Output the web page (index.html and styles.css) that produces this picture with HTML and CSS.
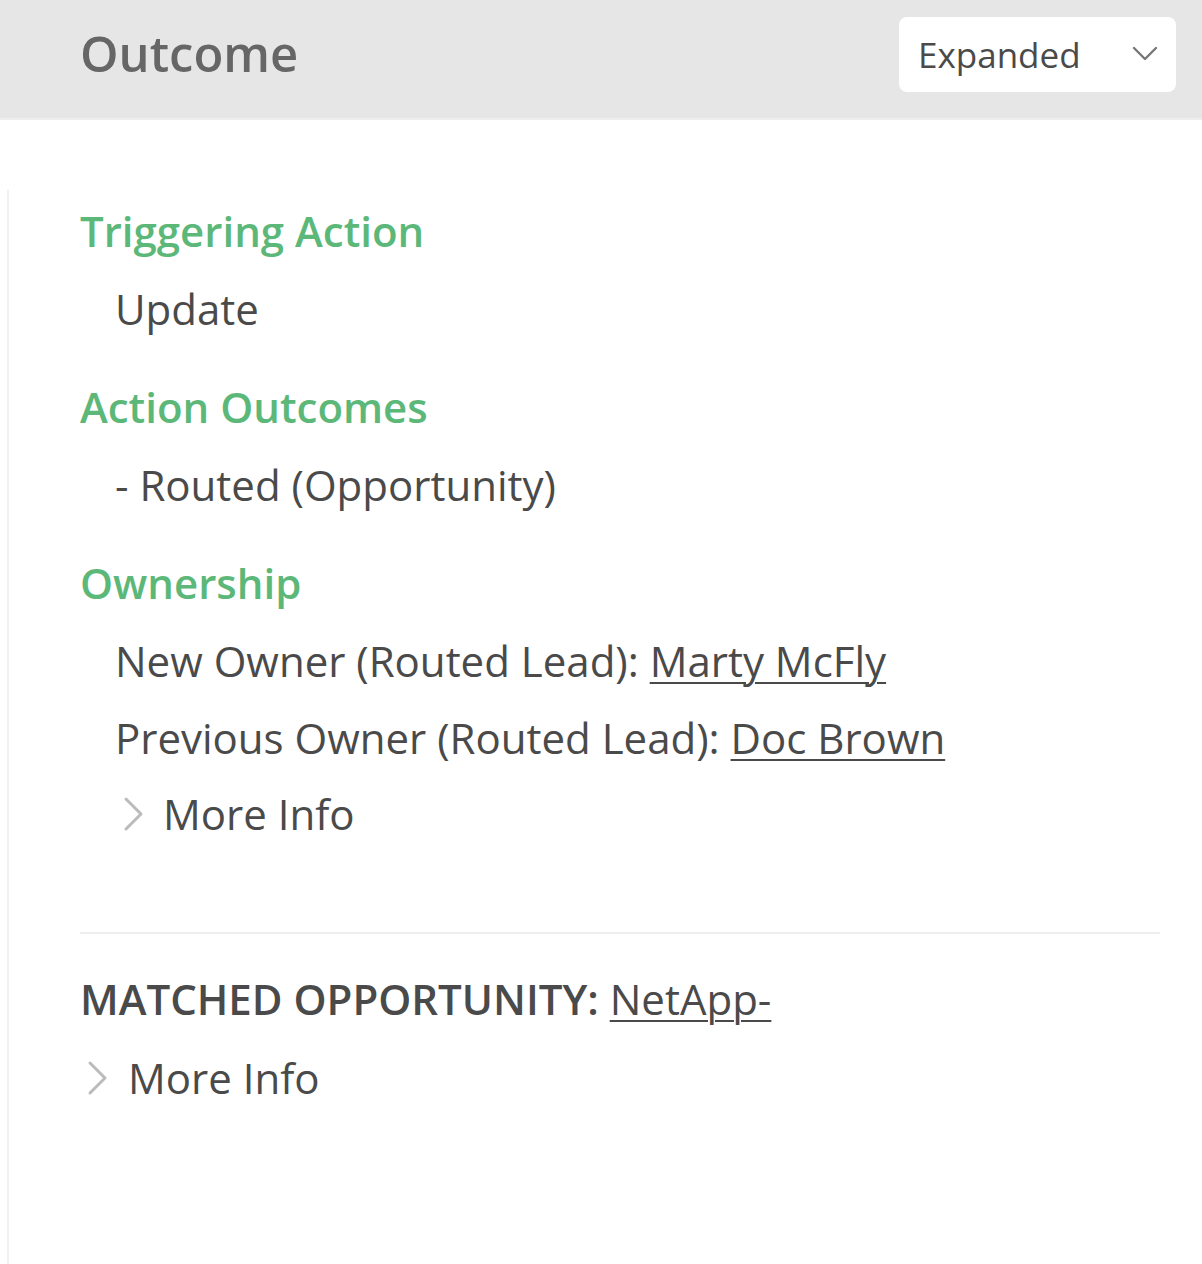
FILE: index.html
```html
<!DOCTYPE html>
<html>
<head>
<meta charset="utf-8">
<link rel="stylesheet" href="styles.css">
</head>
<body>
<header class="topbar">
  <h1 class="title">Outcome</h1>
  <div class="select">
    <span class="select-label">Expanded</span>
    <svg class="select-chev" width="26" height="16" viewBox="0 0 26 16"><path d="M2 2 L13 13 L24 2" fill="none" stroke="#777" stroke-width="2.4" stroke-linecap="round" stroke-linejoin="round"/></svg>
  </div>
</header>
<main class="panel">
  <section class="section">
    <h2 class="heading">Triggering Action</h2>
    <div class="line">Update</div>
  </section>
  <section class="section">
    <h2 class="heading">Action Outcomes</h2>
    <div class="line">- Routed (Opportunity)</div>
  </section>
  <section class="section">
    <h2 class="heading">Ownership</h2>
    <div class="line">New Owner (Routed Lead): <a class="link" href="#">Marty McFly</a></div>
    <div class="line">Previous Owner (Routed Lead): <a class="link" href="#">Doc Brown</a></div>
    <div class="line more more-inner">
      <svg class="chev" width="22" height="36" viewBox="0 0 22 36"><path d="M3 3 L18 18 L3 33" fill="none" stroke="#bbb" stroke-width="3" stroke-linecap="round" stroke-linejoin="round"/></svg>
      <span>More Info</span>
    </div>
  </section>
  <hr class="divider">
  <div class="matched"><span class="matched-label">MATCHED OPPORTUNITY:</span> <a class="link" href="#">NetApp-</a></div>
  <div class="line more more-outer">
    <svg class="chev" width="22" height="36" viewBox="0 0 22 36"><path d="M3 3 L18 18 L3 33" fill="none" stroke="#bbb" stroke-width="3" stroke-linecap="round" stroke-linejoin="round"/></svg>
    <span>More Info</span>
  </div>
</main>
</body>
</html>
```
FILE: styles.css
```css
html, body {
  margin: 0;
  padding: 0;
  background: #fff;
}
body {
  font-family: "Open Sans", "Noto Sans", sans-serif;
  color: #4a4a4a;
  height: 1264px;
  overflow: hidden;
}
.topbar {
  height: 118px;
  background: #e6e6e6;
  border-bottom: 2px solid #ededed;
  display: flex;
  align-items: center;
  justify-content: space-between;
  padding: 0 26px 0 80px;
}
.title {
  margin: 0;
  font-size: 49px;
  font-weight: 600;
  color: #666;
  line-height: 1;
  position: relative;
  top: -6px;
}
.select {
  width: 277px;
  height: 75px;
  box-sizing: border-box;
  background: #fff;
  border-radius: 8px;
  display: flex;
  align-items: center;
  justify-content: space-between;
  padding: 0 18px 0 19px;
  position: relative;
  top: -5px;
}
.select-label {
  font-size: 35px;
  color: #4a4a4a;
}
.panel {
  margin: 70px 0 0 7px;
  border-left: 2px solid #f1f1f1;
  padding: 13px 42px 0 71px;
  min-height: 1100px;
}
.section {
  margin-bottom: 31.5px;
}
.heading {
  margin: 0 0 12px 0;
  font-size: 42px;
  font-weight: 600;
  line-height: 56px;
  color: #5cb878;
}
.line {
  font-size: 42px;
  line-height: 76.5px;
  padding-left: 35px;
  white-space: nowrap;
}
.link {
  color: #4a4a4a;
  text-decoration: underline;
  text-decoration-thickness: 2px;
  text-underline-offset: 5px;
}
.more {
  display: flex;
  align-items: center;
}
.more-inner {
  padding-left: 43px;
}
.more-inner .chev {
  margin-right: 18px;
}
.more-outer {
  padding-left: 7px;
  margin-top: 3px;
}
.more-outer .chev {
  margin-right: 19px;
}
.divider {
  border: 0;
  border-top: 2px solid #eeeeee;
  margin: 79px 0 27px 0;
}
.matched {
  font-size: 42px;
  line-height: 76px;
  white-space: nowrap;
}
.matched-label {
  font-weight: 600;
}
```
